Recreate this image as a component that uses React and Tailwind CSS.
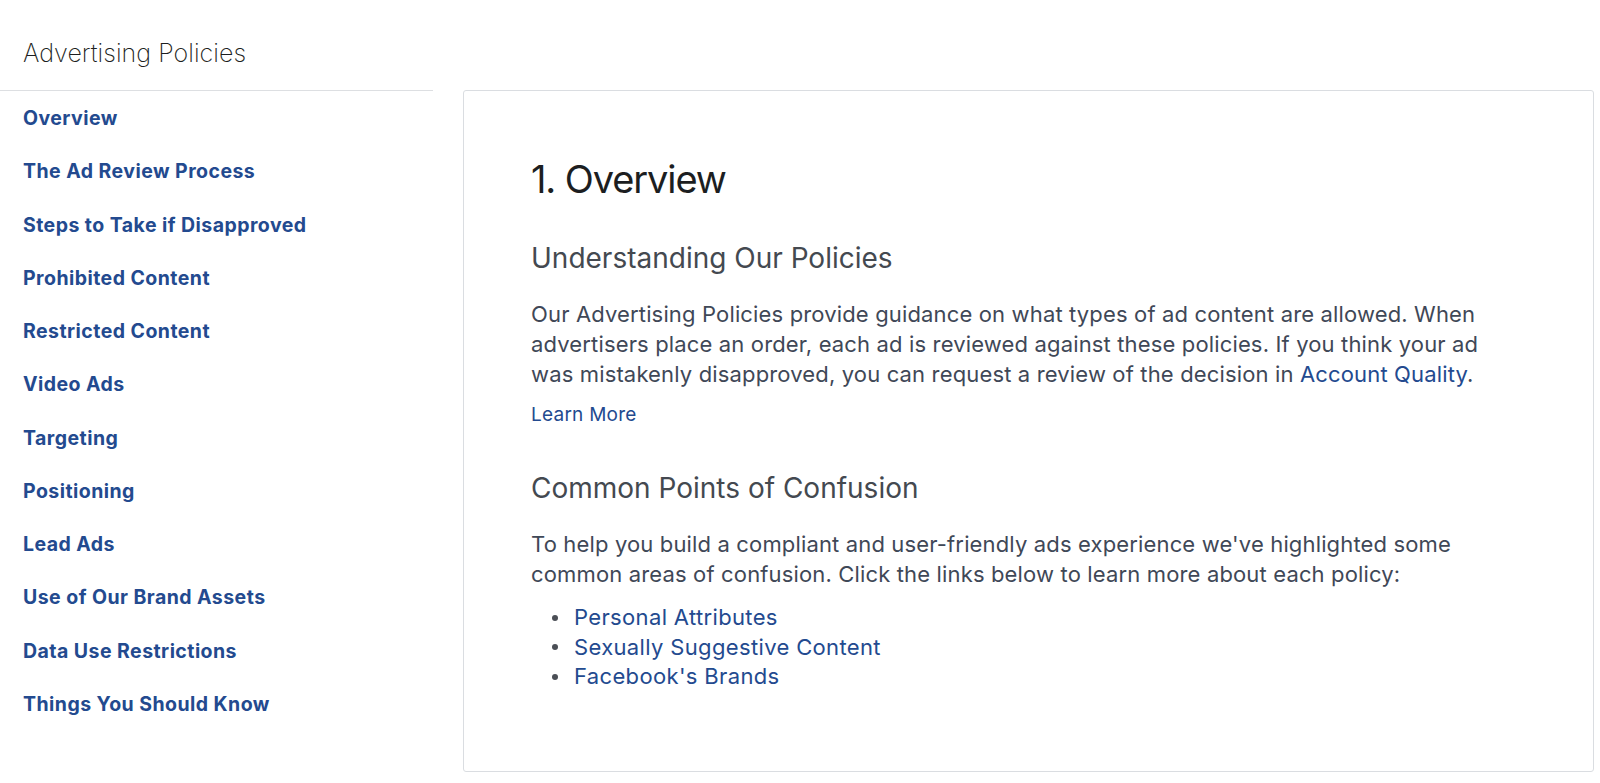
// Advertising Policies help page

const navItems = [
  "Overview",
  "The Ad Review Process",
  "Steps to Take if Disapproved",
  "Prohibited Content",
  "Restricted Content",
  "Video Ads",
  "Targeting",
  "Positioning",
  "Lead Ads",
  "Use of Our Brand Assets",
  "Data Use Restrictions",
  "Things You Should Know",
];

const confusionLinks = [
  "Personal Attributes",
  "Sexually Suggestive Content",
  "Facebook's Brands",
];

export default function App() {
  return (
    <div className="flex h-[783px] bg-white font-['Inter','Liberation_Sans',sans-serif] overflow-hidden">

      {/* Sidebar */}
      <div className="w-[433px] shrink-0">
        <div className="h-[91px] border-b border-[#dddfe2] pl-[23px] pt-[38px]">
          <h1 className="text-[25px] leading-[30px] font-extralight text-[#1c1e21] tracking-[0.05px]">
            Advertising Policies
          </h1>
        </div>

        <nav className="flex flex-col pl-[23px] pt-[1px]">
          {navItems.map((item) => (
            <a
              key={item}
              href="#"
              className="text-[19.5px] leading-[53.27px] font-bold tracking-[0.45px] text-[#234a8f]"
            >
              {item}
            </a>
          ))}
        </nav>
      </div>

      {/* Body */}
      <div className="flex-1 pl-[30px] pr-[6px] pt-[90px]">
        <div className="h-[682px] rounded-[3px] border border-[#dadde1] pl-[67px] pt-[64px]">
          <div className="w-[965px]">

            <h2 className="text-[38px] leading-[48px] font-normal text-[#1c1e21] tracking-[-1.1px]">
              1. Overview
            </h2>

            <h3 className="mt-[37px] text-[28px] leading-[36px] font-normal text-[#444950]">
              Understanding Our Policies
            </h3>

            <p className="mt-[23px] text-[22px] leading-[30px] tracking-[0.15px] text-[#3f4857]">
              Our Advertising Policies provide guidance on what types of ad content are allowed. When
              advertisers place an order, each ad is reviewed against these policies. If you think your ad
              was mistakenly disapproved, you can request a review of the decision in{" "}
              <a href="#" className="text-[#234a8f]">Account Quality</a>.
            </p>

            <a href="#" className="mt-[14px] block text-[19px] leading-[24px] tracking-[0.25px] text-[#234a8f]">
              Learn More
            </a>

            <h3 className="mt-[43px] text-[28px] leading-[36px] font-normal text-[#444950]">
              Common Points of Confusion
            </h3>

            <p className="mt-[23px] text-[22px] leading-[30px] tracking-[0.15px] text-[#3f4857]">
              To help you build a compliant and user-friendly ads experience we've highlighted some
              common areas of confusion. Click the links below to learn more about each policy:
            </p>

            <ul className="mt-[14px] flex flex-col">
              {confusionLinks.map((link) => (
                <li key={link} className="flex items-center gap-[16px] pl-[21px] text-[22px] leading-[29.5px] tracking-[0.35px]">
                  <span className="h-[6px] w-[6px] rounded-full bg-[#4b4f56]" />
                  <a href="#" className="text-[#234a8f]">{link}</a>
                </li>
              ))}
            </ul>

          </div>
        </div>
      </div>

    </div>
  );
}
